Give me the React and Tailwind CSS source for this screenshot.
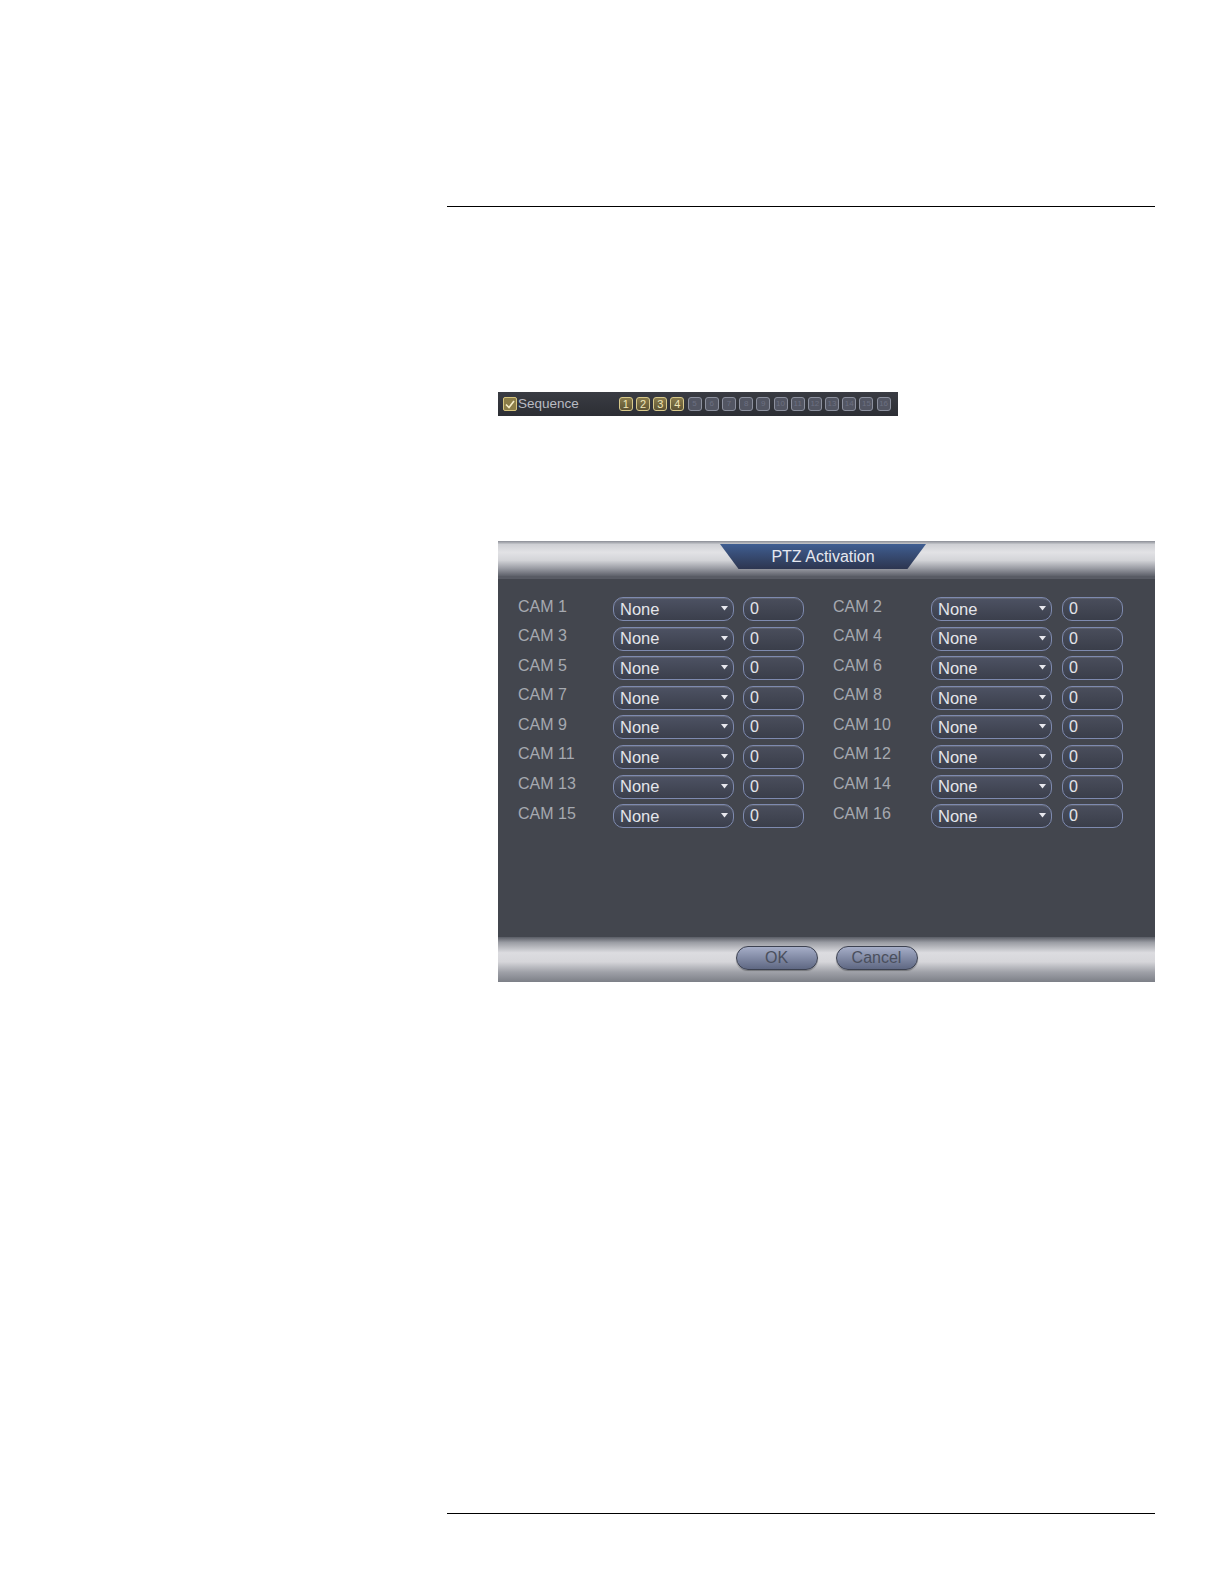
import React from "react";

const font = { fontFamily: '"Liberation Sans", Arial, sans-serif' };

function Select() {
  return (
    <div className="h-[24px] w-[121px] rounded-[10px] border border-[#7e8aaf] bg-gradient-to-b from-[#4d5263] to-[#3b3f4c] flex items-center justify-between pl-[6px] pr-[5px] shadow-[inset_0_1px_0_rgba(255,255,255,0.12)]">
      <span className="text-[16.5px] leading-none text-[#e4e5ea]">None</span>
      <svg width="7" height="5" viewBox="0 0 7 5" className="mt-[-1px]"><path d="M0 0 L7 0 L3.5 4.5 Z" fill="#e8e8ee" /></svg>
    </div>
  );
}

function NumInput() {
  return (
    <div className="h-[24px] w-[61px] rounded-[10px] border border-[#7e8aaf] bg-gradient-to-b from-[#4a4e5c] to-[#3a3e4a] flex items-center pl-[6px] shadow-[inset_0_1px_0_rgba(255,255,255,0.1)]">
      <span className="text-[16px] leading-none text-[#e4e5ea]">0</span>
    </div>
  );
}

function Row({ cam, right }) {
  return (
    <div className="flex items-center h-[24px]">
      <div className={`${right ? "w-[98px]" : "w-[95px]"} text-[16px] leading-none text-[#a6a9b0] -mt-[5px]`}>CAM {cam}</div>
      <Select />
      <div className={right ? "w-[10px]" : "w-[9px]"} />
      <NumInput />
    </div>
  );
}

function SeqBox({ n, active }) {
  return active ? (
    <div className="h-[14px] w-[14px] rounded-[3px] border border-[#d8c98a] bg-gradient-to-b from-[#8a7c4c] to-[#5e5434] flex items-center justify-center text-[11px] leading-none text-[#f0e6b8]">
      {n}
    </div>
  ) : (
    <div className="h-[14px] w-[14px] rounded-[3px] border border-[#8c909e] bg-[#535663] flex items-center justify-center text-[8px] leading-none text-[#6c7082]">
      {n}
    </div>
  );
}

export default function App() {
  const cams = Array.from({ length: 16 }, (_, i) => i + 1);
  return (
    <div className="w-[1224px] h-[1584px] bg-white" style={font}>
      <div className="pl-[447px] pr-[69px]">
        <div className="h-[206px]" />
        <div className="h-px bg-black" />
        <div className="h-[185px]" />
        {/* Sequence bar */}
        <div className="ml-[51px] w-[400px] h-[24px] bg-gradient-to-b from-[#3a3c43] to-[#2c2e34] flex items-center">
          <div className="ml-[5px] h-[14px] w-[14px] rounded-[2px] border border-[#d6c47c] bg-[#8b7d48] flex items-center justify-center">
            <svg width="10" height="9" viewBox="0 0 10 9"><path d="M1 4.5 L4 7.5 L9 1" stroke="#f6eec8" strokeWidth="1.6" fill="none" /></svg>
          </div>
          <span className="ml-[1px] text-[13.5px] leading-none text-[#b9bbc2]">Sequence</span>
          <div className="ml-[40px] flex gap-[3.2px]">
            {cams.map((n) => (
              <SeqBox key={n} n={n} active={n <= 4} />
            ))}
          </div>
        </div>
        <div className="h-[125px]" />
        {/* Dialog */}
        <div className="ml-[51px] w-[657px] h-[441px] flex flex-col bg-[#43464e]">
          {/* header band */}
          <div className="relative h-[35px] bg-[linear-gradient(to_bottom,#8a8d95_0%,#cfd0d4_10%,#e2e2e5_32%,#d3d4d8_55%,#9a9ca4_78%,#5e616a_100%)]">
            <div className="absolute left-[222px] top-[3px] w-[206px] h-[25px] [clip-path:polygon(0_0,100%_0,91%_100%,9%_100%)] bg-gradient-to-b from-[#3f5e92] to-[#2d3650] flex items-center justify-center">
              <span className="text-[16px] leading-none text-[#e6e8f0]">PTZ Activation</span>
            </div>
          </div>
          <div className="h-[3px] bg-[#585b64]" />
          {/* body */}
          <div className="flex-1 pl-[20px] pt-[18px] bg-[#43464e]">
            <div className="grid grid-cols-[315px_auto] gap-y-[5.6px] justify-start">
              {cams.map((n) => (
                <Row key={n} cam={n} right={n % 2 === 0} />
              ))}
            </div>
          </div>
          {/* bottom band */}
          <div className="h-[45px] bg-[linear-gradient(to_bottom,#5a5d66_0%,#9a9ca3_12%,#dcdce0_35%,#d6d6da_55%,#9fa1a8_78%,#7c7f87_100%)] flex items-start justify-center pt-[9px] gap-[18px]">
            <button className="h-[24px] w-[82px] rounded-full border border-[#3c4150] bg-gradient-to-b from-[#a6aec8] to-[#5f6883] text-[16px] leading-none text-[#4a4f5d] shadow-[0_1px_1px_rgba(0,0,0,0.3)]">OK</button>
            <button className="h-[24px] w-[82px] rounded-full border border-[#3c4150] bg-gradient-to-b from-[#a6aec8] to-[#5f6883] text-[16px] leading-none text-[#4a4f5d] shadow-[0_1px_1px_rgba(0,0,0,0.3)]">Cancel</button>
          </div>
        </div>
        <div className="h-[531px]" />
        <div className="h-px bg-black" />
      </div>
    </div>
  );
}
